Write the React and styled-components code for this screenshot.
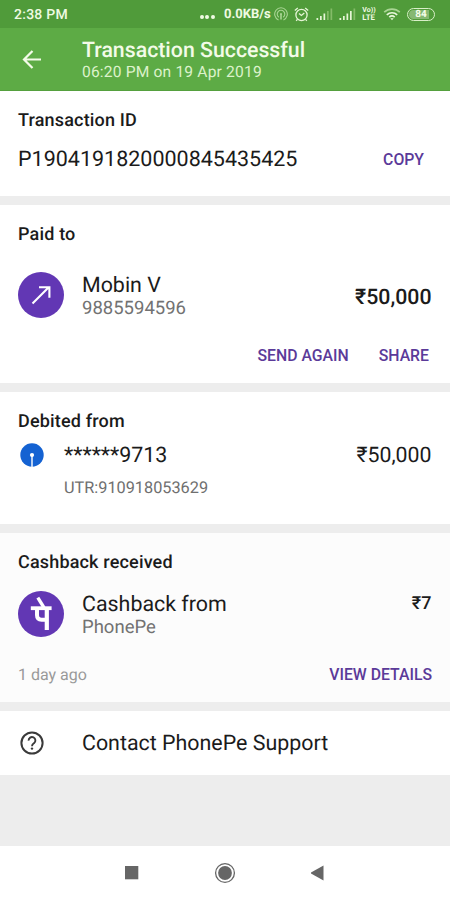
import React from 'react';
import styled, { createGlobalStyle } from 'styled-components';

const GlobalStyle = createGlobalStyle`
  * {
    box-sizing: border-box;
  }

  body {
    margin: 0;
    font-family: Roboto, 'Noto Sans', sans-serif;
    color: #1b1b1b;
    background: #ededed;
    text-rendering: geometricPrecision;
  }
`;

const BackArrow = () => (
  <svg width="20" height="20" viewBox="0 0 20 20" fill="none" stroke="#f4fbe9" strokeWidth="2.2">
    <path d="M19 10.5H2.5M10.5 2L2 10.5l8.5 8.5" />
  </svg>
);

const HotspotIcon = () => (
  <svg width="14" height="14" viewBox="0 0 14 14" fill="none" stroke="#a9d594" strokeWidth="1.1">
    <path d="M4.5 12.9A6.3 6.3 0 1 1 9.5 12.9" />
    <path d="M4.8 10.2A3.8 3.8 0 1 1 9.2 10.2" />
    <path d="M7 7v5.5" strokeWidth="1.6" />
    <circle cx="7" cy="7" r="1" fill="#a9d594" stroke="none" />
  </svg>
);

const AlarmIcon = () => (
  <svg width="15" height="15" viewBox="0 0 15 15" fill="none" stroke="#e6f5d6" strokeWidth="1.3">
    <circle cx="7.5" cy="8" r="5.6" />
    <path d="M5 6.4l2.4 2.1L10.3 6M.8 3.6L3.8 1M14.2 3.6L11.2 1M3.4 12.4l-1.2 1.5M11.6 12.4l1.2 1.5" />
  </svg>
);

const SignalIcon = ({ level }) => (
  <svg width="17" height="13" viewBox="0 0 17 13">
    {[2, 4, 6.5, 9, 11.5].map((height, index) => (
      <rect
        key={height}
        x={0.5 + index * 3.5}
        y={12 - height}
        width="1.7"
        height={height}
        fill={index < level ? '#e6f5d6' : '#84bb68'}
      />
    ))}
  </svg>
);

const WifiIcon = () => (
  <svg width="18" height="14" viewBox="0 0 18 14" fill="none" stroke="#e9f7dc" strokeWidth="1.7">
    <path d="M1.2 5.2a11.3 11.3 0 0 1 15.6 0" stroke="#a9d594" />
    <path d="M3.8 7.8a7.6 7.6 0 0 1 10.4 0" />
    <path d="M6.3 10.2a4 4 0 0 1 5.4 0" />
    <path d="M7.3 11.2h3.4L9 13.3z" fill="#e9f7dc" stroke="none" />
  </svg>
);

const SendArrow = () => (
  <svg width="46" height="46" viewBox="0 0 46 46" fill="none" stroke="#fff" strokeWidth="2.1">
    <path d="M14.5 31.5L30.5 15.5M21 15.3h10.4v10.4" />
  </svg>
);

const PhonePeLogo = () => (
  <svg width="46" height="46" viewBox="0 0 46 46" fill="none" stroke="#fff" strokeWidth="4">
    <path d="M12.8 17.2h20.8" strokeWidth="3.8" />
    <path d="M19.8 6.6l6.2 10" strokeWidth="3.4" />
    <path d="M19 17.5v6.6c0 3.2 1.6 4.6 4.6 4.6h4.9" />
    <path d="M28.8 17.2v21.8" strokeWidth="4.2" />
  </svg>
);

const BankLogo = () => (
  <svg width="24" height="24" viewBox="0 0 24 24">
    <circle cx="12" cy="12" r="11.7" fill="#1462d2" />
    <circle cx="12" cy="12" r="2.1" fill="#fff" />
    <path d="M12 12v12" stroke="#fff" strokeWidth="1.4" />
  </svg>
);

const HelpIcon = () => (
  <svg width="24" height="24" viewBox="0 0 24 24" fill="none" stroke="#3a3a3a" strokeWidth="2">
    <circle cx="12" cy="12" r="10.6" />
    <path d="M8.6 9.6a3.4 3.4 0 1 1 5.4 2.6c-1.2.9-2 1.4-2 3" strokeWidth="1.9" />
    <circle cx="12" cy="17.6" r="1.2" fill="#3a3a3a" stroke="none" />
  </svg>
);

const App = () => {
  return (
    <Screen>
      <GlobalStyle />
      <StatusBar>
        <Clock>2:38 PM</Clock>
        <Dots><i /><i /><i /></Dots>
        <Speed>0.0KB/s</Speed>
        <StatusIcons>
          <HotspotIcon />
          <AlarmIcon />
          <SignalIcon level={3} />
          <SignalIcon level={4} />
          <Volte><span>Vo))</span><span>LTE</span></Volte>
          <WifiIcon />
          <Battery><span>84</span></Battery>
        </StatusIcons>
      </StatusBar>

      <Header>
        <BackArrow />
        <div>
          <HeaderTitle>Transaction Successful</HeaderTitle>
          <HeaderDate>06:20 PM on 19 Apr 2019</HeaderDate>
        </div>
      </Header>

      <Card $height={105}>
        <CardTitle>Transaction ID</CardTitle>
        <Row $top={14}>
          <Primary $size={21.5}>P1904191820000845435425</Primary>
          <Action $end={8}>COPY</Action>
        </Row>
      </Card>

      <Card $height={178}>
        <CardTitle>Paid to</CardTitle>
        <Row $top={25}>
          <Avatar><SendArrow /></Avatar>
          <Details>
            <Primary>Mobin V</Primary>
            <Secondary>9885594596</Secondary>
          </Details>
          <Amount $bold $shift={6}>₹50,000</Amount>
        </Row>
        <Actions>
          <Action>SEND AGAIN</Action>
          <Action $end={3}>SHARE</Action>
        </Actions>
      </Card>

      <Card $height={132}>
        <CardTitle>Debited from</CardTitle>
        <Row $top={9}>
          <BankMark><BankLogo /></BankMark>
          <Primary>******9713</Primary>
          <Amount>₹50,000</Amount>
        </Row>
        <Reference>UTR:910918053629</Reference>
      </Card>

      <Card $height={169} $background="#fcfcfc">
        <CardTitle>Cashback received</CardTitle>
        <Row $top={16}>
          <Avatar><PhonePeLogo /></Avatar>
          <Details>
            <Primary>Cashback from</Primary>
            <Secondary>PhonePe</Secondary>
          </Details>
          <Amount $bold $size={18} $shift={-20}>₹7</Amount>
        </Row>
        <CardFooter>
          <Age>1 day ago</Age>
          <Action>VIEW DETAILS</Action>
        </CardFooter>
      </Card>

      <SupportRow>
        <HelpIcon />
        <Primary>Contact PhonePe Support</Primary>
      </SupportRow>

      <NavBar>
        <svg width="14" height="14"><rect width="13.3" height="13.3" fill="#666" /></svg>
        <svg width="22" height="22" viewBox="0 0 22 22">
          <circle cx="11" cy="11" r="9.4" fill="none" stroke="#666" strokeWidth="1.3" />
          <circle cx="11" cy="11" r="6.9" fill="#666" />
        </svg>
        <svg width="14" height="16" viewBox="0 0 14 16"><path d="M12.5 .5v15L-.8 8z" fill="#666" /></svg>
      </NavBar>
    </Screen>
  );
};

const Screen = styled.div`
  width: 450px;
  height: 900px;
  display: flex;
  flex-direction: column;
  overflow: hidden;
  background: #ededed;
`;

const StatusBar = styled.div`
  height: 28px;
  flex: none;
  display: flex;
  align-items: center;
  padding: 0 15px 0 14px;
  background: #509b3a;
  color: #effae2;
`;

const Clock = styled.span`
  width: 186px;
  padding-top: 1px;
  font-size: 14px;
  font-weight: 500;
  letter-spacing: 0.25px;
`;

const Dots = styled.span`
  display: flex;
  gap: 1.7px;
  width: 24px;
  padding-top: 6px;

  i {
    width: 3.8px;
    height: 3.8px;
    border-radius: 50%;
    background: #effae2;
  }
`;

const Speed = styled.span`
  width: 50px;
  padding-top: 1px;
  font-size: 13px;
  font-weight: 700;
  white-space: nowrap;
`;

const StatusIcons = styled.div`
  flex: 1;
  display: flex;
  align-items: center;
  justify-content: space-between;
`;

const Volte = styled.span`
  display: flex;
  flex-direction: column;
  width: 14px;
  font-size: 7.8px;
  line-height: 7px;
  font-weight: 700;
  white-space: nowrap;

  span {
    height: 7px;
    overflow: hidden;
  }

  span:first-child {
    font-size: 7px;
  }
`;

const Battery = styled.span`
  width: 28px;
  height: 13px;
  padding: 1px;
  border: 1px solid #d9efc8;
  border-radius: 7px;

  span {
    display: block;
    height: 9px;
    border-radius: 5px;
    background: linear-gradient(to right, #86b873 84%, transparent 84%);
    color: #f4fdea;
    font-size: 10px;
    line-height: 9.5px;
    font-weight: 700;
    text-align: center;
  }
`;

const Header = styled.header`
  height: 63px;
  flex: none;
  display: flex;
  align-items: center;
  gap: 40px;
  padding: 0 22px 0 22px;
  background: #5dab45;
  border-bottom: 1px solid #55a03e;
`;

const HeaderTitle = styled.h1`
  margin: 0;
  padding-top: 1px;
  font-size: 21.3px;
  line-height: 25px;
  font-weight: 500;
  white-space: nowrap;
  color: #f3fbe8;
`;

const HeaderDate = styled.div`
  font-size: 15.6px;
  line-height: 19px;
  letter-spacing: 0.17px;
  color: #dcf2cb;
`;

const Card = styled.section`
  height: ${({ $height }) => $height}px;
  flex: none;
  margin-bottom: 9px;
  padding: 18px 18px 0;
  background: ${({ $background }) => $background || '#fff'};
`;

const CardTitle = styled.h2`
  margin: 0 0 1px;
  font-size: 18px;
  line-height: 23px;
  font-weight: 500;
  letter-spacing: 0.17px;
`;

const Row = styled.div`
  display: flex;
  align-items: center;
  padding-top: ${({ $top }) => $top}px;
`;

const Primary = styled.div`
  font-size: ${({ $size }) => $size || 21.4}px;
  line-height: 26px;
  white-space: nowrap;
`;

const Secondary = styled.div`
  font-size: 18.5px;
  line-height: 19px;
  color: #727272;
`;

const Details = styled.div`
  margin-left: 18px;
  padding-top: 1px;
`;

const Avatar = styled.div`
  width: 46px;
  height: 46px;
  border-radius: 50%;
  background: #6237b4;
`;

const BankMark = styled.div`
  width: 46px;
  height: 26px;
  padding-left: 2px;
`;

const Amount = styled.div`
  margin: 0 0.5px 0 auto;
  padding-top: ${({ $shift }) => ($shift > 0 ? $shift : 0)}px;
  padding-bottom: ${({ $shift }) => ($shift < 0 ? -$shift : 0)}px;
  font-size: ${({ $size }) => $size || 21.3}px;
  line-height: 24px;
  font-weight: ${({ $bold }) => ($bold ? 500 : 400)};
`;

const Action = styled.button`
  margin: 0 ${({ $end }) => $end || 0}px 0 auto;
  padding: 0;
  border: 0;
  background: none;
  font-family: inherit;
  font-size: 15.8px;
  line-height: 20px;
  font-weight: 500;
  color: #5b3a99;
  white-space: nowrap;
`;

const Actions = styled.div`
  display: flex;
  justify-content: flex-end;
  gap: 30px;
  padding-top: 28px;

  ${Action} {
    margin-left: 0;
  }
`;

const Reference = styled.div`
  padding: 9px 0 0 46px;
  font-size: 16.3px;
  line-height: 20px;
  color: #6f6f6f;
`;

const CardFooter = styled.div`
  display: flex;
  align-items: center;
  padding-top: 28px;
`;

const Age = styled.span`
  font-size: 16px;
  line-height: 20px;
  color: #999;
`;

const SupportRow = styled.section`
  height: 64px;
  flex: none;
  display: flex;
  align-items: center;
  gap: 38px;
  padding: 0 20px;
  background: #fff;

  ${Primary} {
    padding-top: 1px;
  }
`;

const NavBar = styled.nav`
  height: 54px;
  flex: none;
  display: flex;
  align-items: center;
  justify-content: center;
  gap: 75px;
  margin-top: auto;
  background: #fff;
`;

export default App;
